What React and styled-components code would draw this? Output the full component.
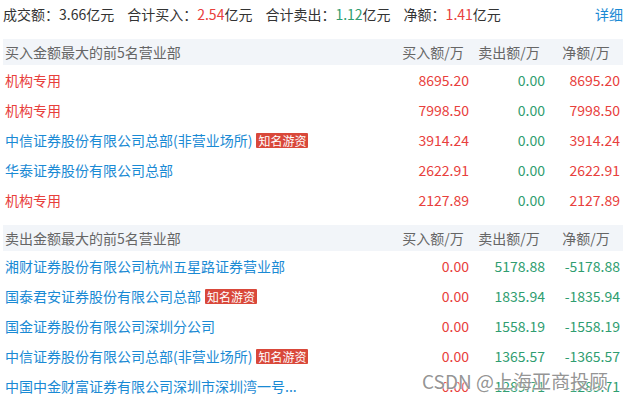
import React from 'react';
import styled, { createGlobalStyle } from 'styled-components';

const GlobalStyle = createGlobalStyle`
  body {
    margin: 0;
    background: #fff;
    font-family: "Microsoft YaHei", "Noto Sans CJK SC", "Noto Sans", sans-serif;
    font-size: 14px;
  }
`;

const RED = '#e8403c';
const GREEN = '#2f9d70';
const BLUE = '#1a8ad4';

const buyRows = [
  { name: '机构专用', inst: true, buy: '8695.20', sell: '0.00', net: '8695.20' },
  { name: '机构专用', inst: true, buy: '7998.50', sell: '0.00', net: '7998.50' },
  { name: '中信证券股份有限公司总部(非营业场所)', tag: true, buy: '3914.24', sell: '0.00', net: '3914.24' },
  { name: '华泰证券股份有限公司总部', buy: '2622.91', sell: '0.00', net: '2622.91' },
  { name: '机构专用', inst: true, buy: '2127.89', sell: '0.00', net: '2127.89' }
];

const sellRows = [
  { name: '湘财证券股份有限公司杭州五星路证券营业部', buy: '0.00', sell: '5178.88', net: '-5178.88' },
  { name: '国泰君安证券股份有限公司总部', tag: true, buy: '0.00', sell: '1835.94', net: '-1835.94' },
  { name: '国金证券股份有限公司深圳分公司', buy: '0.00', sell: '1558.19', net: '-1558.19' },
  { name: '中信证券股份有限公司总部(非营业场所)', tag: true, buy: '0.00', sell: '1365.57', net: '-1365.57' },
  { name: '中国中金财富证券有限公司深圳市深圳湾一号...', buy: '0.00', sell: '1289.71', net: '-1289.71' }
];

const Section = ({ title, rows, side }) => (
  <SectionWrap>
    <HeadRow>
      <HeadCell>{title}</HeadCell>
      <HeadCell center>买入额/万</HeadCell>
      <HeadCell center>卖出额/万</HeadCell>
      <HeadCell center>净额/万</HeadCell>
    </HeadRow>
    {rows.map((r, i) => (
      <Row key={i}>
        <NameCell color={r.inst ? RED : BLUE}>
          {r.name}
          {r.tag && <Tag>知名游资</Tag>}
        </NameCell>
        <NumCell color={side === 'buy' ? RED : RED}>{r.buy}</NumCell>
        <NumCell color={GREEN}>{r.sell}</NumCell>
        <NumCell color={side === 'buy' ? RED : GREEN} last>{r.net}</NumCell>
      </Row>
    ))}
  </SectionWrap>
);

const App = () => (
  <Page>
    <GlobalStyle />
    <Summary>
      <Stat>成交额：<Val>3.66</Val>亿元</Stat>
      <Stat>合计买入：<Val color={RED}>2.54</Val>亿元</Stat>
      <Stat>合计卖出：<Val color={GREEN}>1.12</Val>亿元</Stat>
      <Stat>净额：<Val color={RED}>1.41</Val>亿元</Stat>
      <More>详细</More>
    </Summary>
    <Section title="买入金额最大的前5名营业部" rows={buyRows} side="buy" />
    <Section title="卖出金额最大的前5名营业部" rows={sellRows} side="sell" />
    <Watermark>CSDN @上海亚商投顾</Watermark>
  </Page>
);

const Page = styled.div`
  position: relative;
  width: 620px;
  height: 399px;
  padding-left: 3px;
  overflow: hidden;
  color: #333;
`;

const Summary = styled.div`
  display: flex;
  align-items: center;
  height: 28px;
  gap: 13px;
`;

const Stat = styled.span`
  color: #333;
  white-space: nowrap;
`;

const Val = styled.span`
  color: ${p => p.color || '#333'};
`;

const More = styled.a`
  margin-left: auto;
  color: ${BLUE};
  cursor: pointer;
`;

const SectionWrap = styled.div`
  margin-top: 11px;

  & + & {
    margin-top: 10px;
  }
`;

const grid = `
  display: grid;
  grid-template-columns: 1fr 76px 76px 78px;
  align-items: center;
`;

const HeadRow = styled.div`
  ${grid}
  height: 26px;
  background: #f2f5f9;
  color: #666;
`;

const HeadCell = styled.div`
  padding-left: ${p => (p.center ? '4px' : '2px')};
  text-align: ${p => (p.center ? 'center' : 'left')};
  white-space: nowrap;
`;

const Row = styled.div`
  ${grid}
  height: 30px;
`;

const NameCell = styled.div`
  display: flex;
  align-items: center;
  padding-left: 2px;
  color: ${p => p.color};
  white-space: nowrap;
`;

const Tag = styled.span`
  margin-left: 4px;
  padding: 0 2px;
  height: 15px;
  line-height: 15px;
  font-size: 12px;
  background: #d9483a;
  color: #fff;
  border-radius: 1px;
`;

const NumCell = styled.div`
  text-align: right;
  padding-right: ${p => (p.last ? '3px' : '0')};
  color: ${p => p.color};
`;

const Watermark = styled.div`
  position: absolute;
  left: 422px;
  top: 367px;
  font-size: 19px;
  color: rgba(120, 120, 120, 0.8);
  text-shadow: 0 0 2px #fff, 0 0 1px #fff;
  white-space: nowrap;
  pointer-events: none;
`;

export default App;
